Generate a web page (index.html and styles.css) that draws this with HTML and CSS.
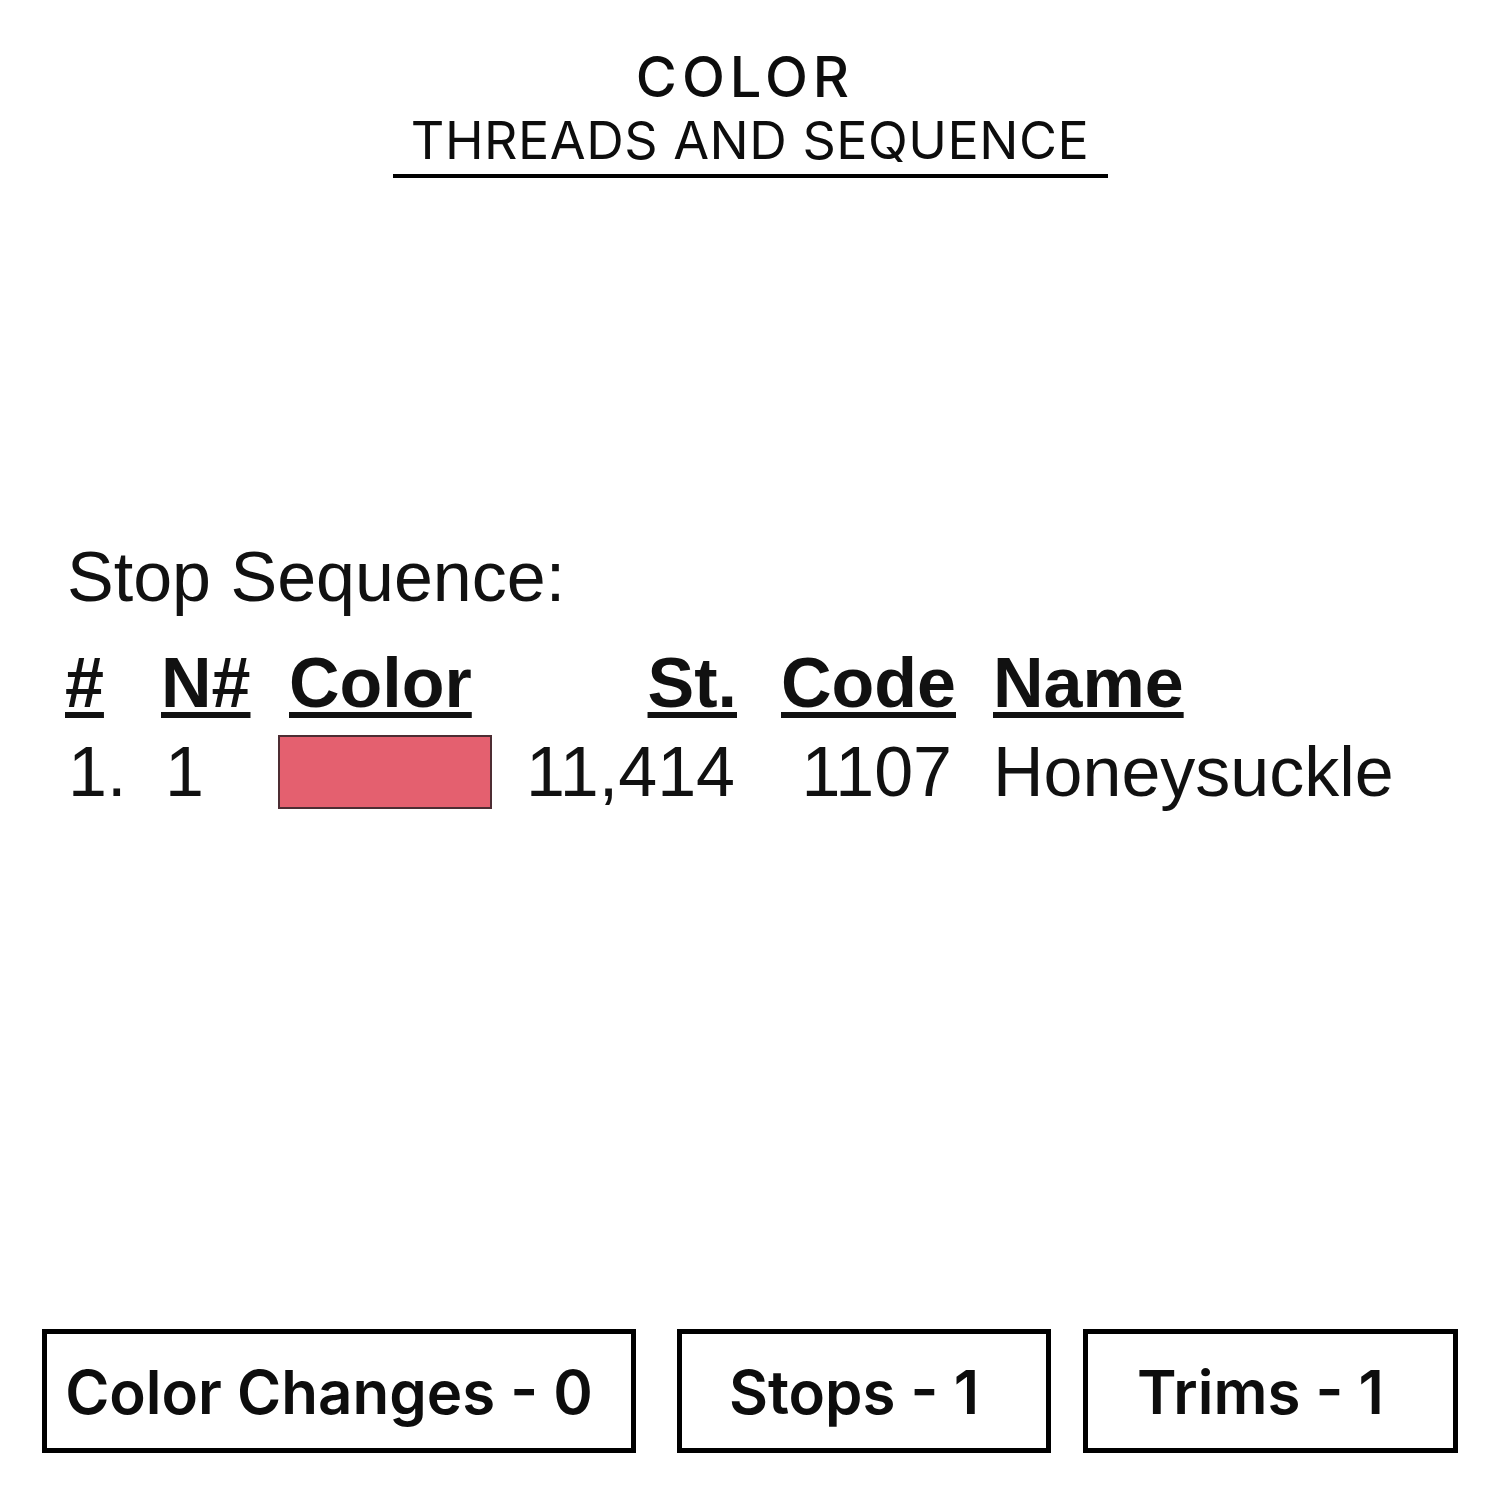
FILE: index.html
```html
<!DOCTYPE html>
<html lang="en">
<head>
<meta charset="utf-8">
<title>Color – Threads and Sequence</title>
<link rel="stylesheet" href="styles.css">
</head>
<body>
<div class="page">
  <header class="title">
    <h1 class="title-main">COLOR</h1>
    <h2 class="title-sub">THREADS AND SEQUENCE</h2>
  </header>

  <section class="seq">
    <div class="seq-label">Stop Sequence:</div>
    <div class="seq-grid">
      <div class="th c-num">#</div>
      <div class="th c-n">N#</div>
      <div class="th c-color">Color</div>
      <div class="th c-st">St.</div>
      <div class="th c-code">Code</div>
      <div class="th c-name">Name</div>

      <div class="td c-num">1.</div>
      <div class="td c-n">1</div>
      <div class="td c-color"><span class="swatch"></span></div>
      <div class="td c-st">11,414</div>
      <div class="td c-code">1107</div>
      <div class="td c-name">Honeysuckle</div>
    </div>
  </section>

  <footer class="stats">
    <div class="stat stat-wide">Color Changes - 0</div>
    <div class="stat stat-mid">Stops - 1</div>
    <div class="stat stat-last">Trims - 1</div>
  </footer>
</div>
</body>
</html>
```

FILE: styles.css
```css
* { box-sizing: border-box; }

html, body {
  margin: 0;
  padding: 0;
  background: #ffffff;
}

.page {
  width: 1500px;
  height: 1500px;
  display: flex;
  flex-direction: column;
  color: #0d0d0d;
}

/* ---------- Title ---------- */
.title {
  align-self: center;
  width: 715px;
  margin-top: 45px;
  border-bottom: 4px solid #000;
  text-align: center;
  font-family: Inter, "Noto Sans", sans-serif;
}

.title-main {
  margin: 0;
  font-size: 56px;
  font-weight: 500;
  line-height: 64px;
  letter-spacing: 5px;
  padding-right: 10px;
}

.title-sub {
  margin: 0;
  font-size: 52px;
  font-weight: 400;
  line-height: 60px;
  letter-spacing: 0.5px;
  padding-top: 2px;
  padding-bottom: 3px;
}

/* ---------- Stop sequence ---------- */
.seq {
  margin-top: 359px;
  padding-left: 65px;
  font-family: "Liberation Sans", Arial, sans-serif;
  font-size: 70px;
  color: #111;
}

.seq-label {
  line-height: 80px;
  padding-left: 2px;
}

.seq-grid {
  display: grid;
  grid-template-columns: 96px 117px 222px 237px 219px auto;
  align-items: center;
  margin-top: 26px;
}

.th {
  font-weight: 700;
  line-height: 80px;
  text-decoration: underline;
  text-decoration-thickness: 6px;
  text-underline-offset: 5px;
}

.td {
  line-height: 74px;
  margin-top: 12px;
}

.c-num { padding-left: 0; }
.td.c-num { padding-left: 3px; }
.td.c-n { padding-left: 4px; }
.th.c-color { padding-left: 11px; }
.c-st { text-align: right; }
.td.c-st { padding-right: 2px; }
.c-code { text-align: right; }
.td.c-code { padding-right: 4px; }
.c-name { padding-left: 37px; }

.swatch {
  display: block;
  width: 214px;
  height: 74px;
  background: #e4606f;
  border: 2px solid #4d2d33;
}

/* ---------- Stats ---------- */
.stats {
  margin-top: auto;
  margin-bottom: 47px;
  padding-left: 42px;
  display: flex;
  font-family: Inter, "Noto Sans", sans-serif;
  font-size: 60px;
  font-weight: 600;
}

.stat {
  height: 124px;
  border: 5px solid #000;
  display: flex;
  align-items: center;
  justify-content: center;
  padding-right: 20px;
  padding-top: 2px;
}

.stat-wide { width: 594px; }
.stat-mid { width: 374px; margin-left: 41px; }
.stat-last { width: 375px; margin-left: 32px; }
```
